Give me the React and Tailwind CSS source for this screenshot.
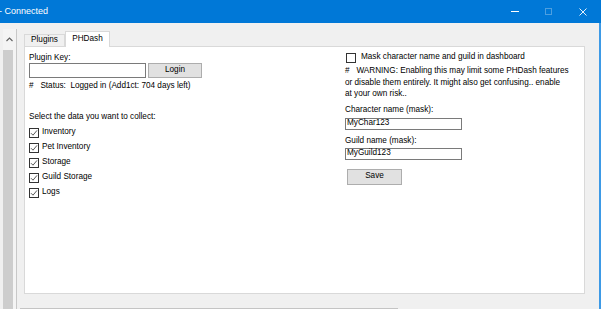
import React from 'react';

const font = { fontFamily: '"Liberation Sans", Arial, sans-serif' };

function Check({ checked }) {
  return (
    <span className="flex h-[10px] w-[10px] items-center justify-center border border-[#333] bg-white">
      {checked && (
        <svg width="8" height="8" viewBox="0 0 8 8">
          <path d="M1 4.2 L3 6.2 L7 1.4" fill="none" stroke="#444" strokeWidth="0.9" />
        </svg>
      )}
    </span>
  );
}

const collect = ['Inventory', 'Pet Inventory', 'Storage', 'Guild Storage', 'Logs'];

export default function App() {
  return (
    <div className="flex h-[309px] w-[601px] flex-col overflow-hidden bg-[#f0f0f0] text-[8.2px] text-black" style={font}>
      <div className="flex h-[23px] shrink-0 items-center bg-[#0078d7] text-white">
        <span className="-ml-[1px] text-[9px]">- Connected</span>
        <div className="ml-auto flex h-full items-center">
          <span className="mr-[26px] h-[1px] w-[8px] bg-white" />
          <span className="mr-[27px] h-[7px] w-[7px] border border-[#4d9fe0]" />
          <svg width="8" height="8" viewBox="0 0 8 8" className="mr-[14px]">
            <path d="M0.5 0.5 L7.5 7.5 M7.5 0.5 L0.5 7.5" stroke="white" strokeWidth="0.9" />
          </svg>
        </div>
      </div>

      <div className="flex flex-1 border-r-2 border-[#3d9ae6]">
        <div className="ml-[3px] mt-[6px] flex w-[14px] flex-col border-r border-[#c8c8c8]">
          <div className="flex h-[21px] items-center justify-center bg-[#f4f4f4]">
            <svg width="7" height="5" viewBox="0 0 7 5">
              <path d="M0.5 4 L3.5 1 L6.5 4" fill="none" stroke="#606060" strokeWidth="1.1" />
            </svg>
          </div>
          <div className="flex-1 bg-[#f4f4f4] pr-[3px]">
            <div className="h-full bg-[#cdcdcd]" />
          </div>
        </div>

        <div className="ml-[7px] flex flex-1 flex-col pr-[14px]">
          <div className="mt-[8px] flex h-[15px] items-end">
            <div className="flex h-[12px] w-[41px] items-center justify-center border border-b-0 border-[#d9d9d9] bg-[#f0f0f0]">Plugins</div>
            <div className="relative z-10 -mb-[1px] flex h-[16px] w-[45px] items-center justify-center border border-b-0 border-[#d9d9d9] bg-white pb-[1px]">PHDash</div>
          </div>
          <div className="flex h-[248px] border border-[#d9d9d9] bg-white">
            <div className="ml-[4px] flex w-[316px] flex-col pt-[5px]">
              <div className="h-[11px] leading-[11px]">Plugin Key:</div>
              <div className="flex h-[15px] gap-[2px]">
                <div className="h-[15px] w-[117px] border border-[#7a7a7a] bg-white" />
                <div className="flex h-[15px] w-[54px] items-center justify-center border border-[#adadad] bg-[#e1e1e1]">Login</div>
              </div>
              <div className="mt-[2px] h-[11px] leading-[11px]">#&nbsp;&nbsp; Status:&nbsp; Logged in (Add1ct: 704 days left)</div>
              <div className="mt-[20px] h-[11px] leading-[11px]">Select the data you want to collect:</div>
              <div className="mt-[3px] flex flex-col">
                {collect.map((c) => (
                  <div key={c} className="flex h-[15px] items-center gap-[3px]">
                    <Check checked />
                    <span>{c}</span>
                  </div>
                ))}
              </div>
            </div>

            <div className="flex flex-col pt-[5px]">
              <div className="flex h-[11px] items-center gap-[5px] pl-[1px]">
                <Check />
                <span>Mask character name and guild in dashboard</span>
              </div>
              <div className="mt-[2px] whitespace-nowrap leading-[11.5px]">
                #&nbsp;&nbsp; WARNING: Enabling this may limit some PHDash features
                <br />
                or disable them entirely. It might also get confusing.. enable
                <br />
                at your own risk..
              </div>
              <div className="mt-[4px] h-[11px] leading-[11px]">Character name (mask):</div>
              <div className="mt-[3px] flex h-[12px] w-[117px] items-center border border-[#7a7a7a] bg-white pl-[1px]">MyChar123</div>
              <div className="mt-[5px] h-[11px] leading-[11px]">Guild name (mask):</div>
              <div className="mt-[2px] flex h-[12px] w-[117px] items-center border border-[#7a7a7a] bg-white pl-[1px]">MyGuild123</div>
              <div className="ml-[2px] mt-[9px] flex h-[16px] w-[55px] items-center justify-center border border-[#adadad] bg-[#e1e1e1]">Save</div>
            </div>
          </div>
          <div className="mt-[14px] flex h-[2px] w-[378px] -ml-[4px] bg-[#c4c4c4]" />
        </div>
      </div>
    </div>
  );
}
